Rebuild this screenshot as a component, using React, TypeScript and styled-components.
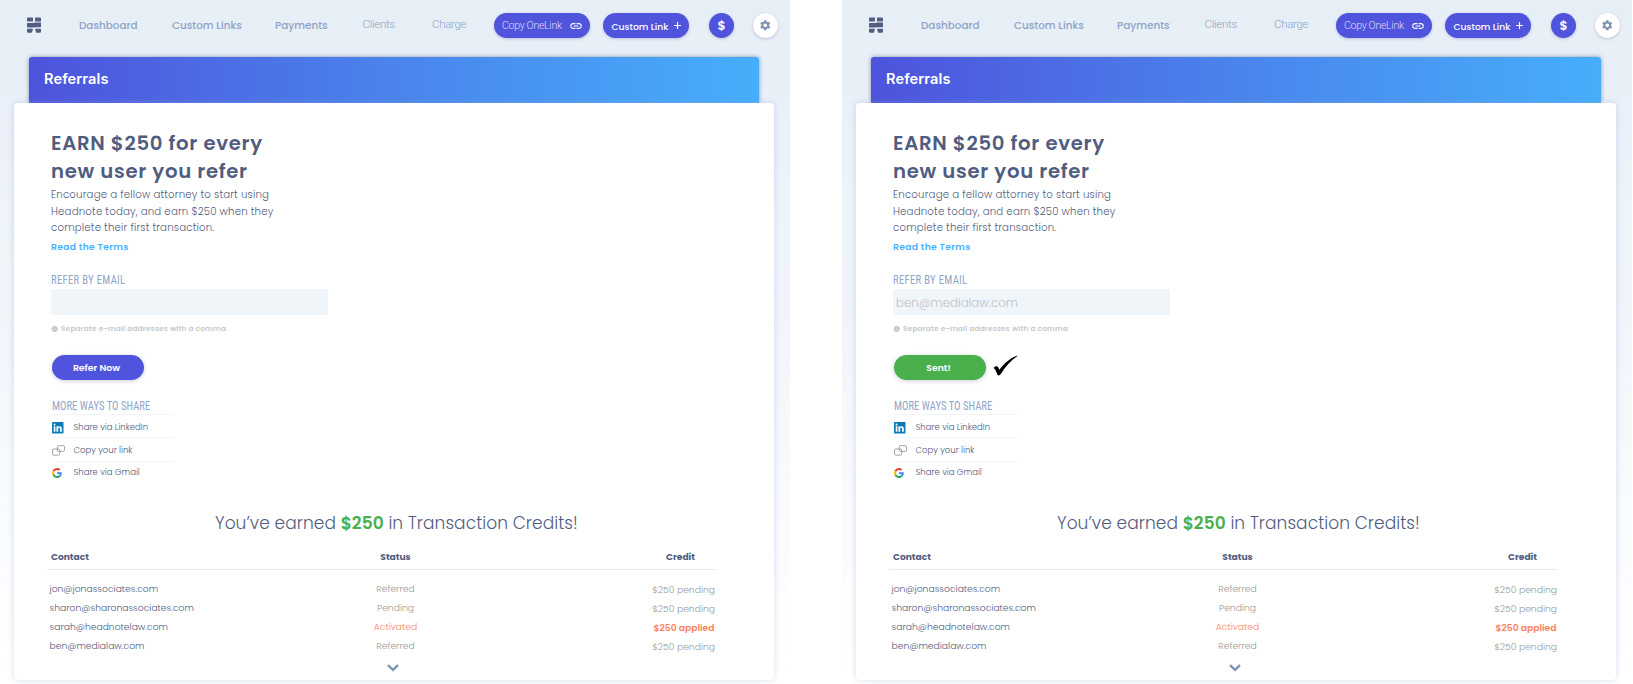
import React from 'react';
import styled, { createGlobalStyle } from 'styled-components';
import { MdLink, MdSettings, MdInfo } from 'react-icons/md';

const Global = createGlobalStyle`
  * { box-sizing: border-box; }
  html, body { margin: 0; padding: 0; background: #fff; }
  body { font-family: Poppins, Inter, sans-serif; color: #505d80; white-space: nowrap; overflow: hidden; }
  button { font-family: inherit; border: 0; margin: 0; padding: 0; }
`;

const Stage = styled.div`
  display: flex;
  gap: 52px;
  width: 1633px;
  height: 684px;
`;

const Screen = styled.section`
  width: 790px;
  height: 684px;
  overflow: hidden;
  background: linear-gradient(180deg, #e6eef6 0%, #e8eff7 9%, #ecf0f9 20%, #eef4f8 30%, #f0f4fa 42%, #f5f8fb 60%, #fafbfe 76%, #fefefe 92%, #fff 100%);
`;

const Nav = styled.nav`
  display: flex;
  align-items: flex-start;
  height: 57px;
  padding: 13px 0 0 27px;
  > * { flex: none; }
`;

const LogoMark = styled.svg`
  width: 14px;
  height: 16px;
  margin: 4px 38px 0 0;
  fill: #525e82;
`;

const NavLink = styled.a<{ $width: number }>`
  width: ${(p) => p.$width}px;
  font-size: 10.4px;
  font-weight: 500;
  line-height: 25px;
  color: #8fa3c6;
`;

const NavLinkLight = styled.a<{ $width: number }>`
  width: ${(p) => p.$width}px;
  font: 300 11.5px/23px Roboto, sans-serif;
  letter-spacing: -0.3px;
  color: #8fa3c6;
`;

const Pill = styled.button<{ $width: number; $gap: number }>`
  display: flex;
  align-items: center;
  width: ${(p) => p.$width}px;
  height: 25px;
  margin-right: ${(p) => p.$gap}px;
  padding-left: 8.5px;
  border-radius: 13px;
  background: #5054dc;
  color: #fff;
  text-align: left;
  box-shadow: 0 1px 3px rgba(80, 84, 160, 0.3);
`;

const CopyLabel = styled.span`
  flex: 1;
  font: 300 10.6px/25px Roboto, sans-serif;
  letter-spacing: -0.33px;
  color: #dcddfb;
`;

const CustomLabel = styled.span`
  width: 62px;
  padding-top: 2px;
  font-size: 9.2px;
  font-weight: 500;
  line-height: 25px;
`;

const LinkIcon = styled(MdLink)`
  width: 14px;
  height: 14px;
  margin: 1px 6.5px 0 0;
`;

const PlusIcon = styled.svg`
  width: 7px;
  height: 7px;
`;

const RoundButton = styled.button<{ $light?: boolean }>`
  display: flex;
  align-items: center;
  justify-content: center;
  width: 25px;
  height: 25px;
  margin-right: 18.5px;
  border-radius: 50%;
  font-size: 12.5px;
  font-weight: 600;
  color: ${(p) => (p.$light ? '#8093b0' : '#fff')};
  background: ${(p) => (p.$light ? '#fff' : '#5054dc')};
  box-shadow: 0 1px 3px rgba(80, 84, 140, 0.3);
`;

const GearIcon = styled(MdSettings)`
  width: 12.5px;
  height: 12.5px;
`;

const Banner = styled.header`
  width: 730px;
  height: 46px;
  margin-left: 29px;
  padding-left: 15px;
  border-radius: 3px 3px 0 0;
  background: linear-gradient(90deg, #4e53dc 0%, #4a84ec 50%, #46aefb 100%);
  box-shadow: 0 0 4px rgba(60, 80, 120, 0.6);
  font: 600 14.6px/45px Inter, sans-serif;
  letter-spacing: 0.1px;
  color: #fff;
`;

const Card = styled.main`
  position: relative;
  display: flex;
  flex-direction: column;
  width: 760px;
  height: 577px;
  margin-left: 14px;
  padding: 26px 0 0 37px;
  border-radius: 4px;
  background: #fff;
  box-shadow: 0 0 6px rgba(150, 175, 220, 0.4);
`;

const Headline = styled.h1`
  margin: 0;
  font-size: 19.7px;
  font-weight: 600;
  line-height: 28px;
  letter-spacing: 0.7px;
`;

const Intro = styled.p`
  margin: 2px 0 3px;
  font-size: 10.2px;
  font-weight: 300;
  line-height: 16.5px;
  letter-spacing: 0.18px;
`;

const Terms = styled.a`
  font-size: 9.2px;
  font-weight: 600;
  line-height: 14px;
  letter-spacing: 0.32px;
  color: #4bb1fc;
`;

const Caption = styled.h2<{ $tight?: boolean }>`
  margin: ${(p) => (p.$tight ? '20px 0 2px 1px' : '20px 0 3px')};
  font: 400 12px/12px 'Roboto Condensed', Roboto, sans-serif;
  letter-spacing: ${(p) => (p.$tight ? 0.06 : 0.38)}px;
  transform: scaleX(0.88);
  transform-origin: left;
  color: #91a5c7;
`;

const EmailField = styled.div`
  width: 277px;
  height: 26px;
  padding-left: 3px;
  border-radius: 2px;
  background: #f0f5fa;
  font-size: 11.8px;
  font-weight: 300;
  line-height: 28px;
  color: #bcc2c8;
`;

const Hint = styled.p`
  display: flex;
  align-items: center;
  gap: 2.5px;
  margin: 9px 0 21px;
  font-size: 7.4px;
  font-weight: 600;
  line-height: 10px;
  letter-spacing: 0.16px;
  color: #c6c8cb;
  svg { width: 7.5px; height: 7.5px; }
`;

const SubmitRow = styled.div`
  display: flex;
  gap: 7px;
  height: 25px;
  margin-left: 1px;
  svg { margin-top: 0.5px; }
`;

const Submit = styled.button<{ $sent: boolean }>`
  width: 92px;
  height: 25px;
  padding-right: 3px;
  border-radius: 13px;
  background: ${(p) => (p.$sent ? '#49b04c' : '#5054dc')};
  box-shadow: 0 1px 4px rgba(60, 60, 110, 0.25);
  color: #fff;
  font-size: 9.3px;
  font-weight: 600;
  line-height: 25px;
`;

const ShareList = styled.ul`
  width: 123px;
  margin: 0 0 0 1px;
  padding: 0;
  list-style: none;
`;

const ShareItem = styled.li`
  display: flex;
  align-items: center;
  height: 23.5px;
  padding-top: 2px;
  border-top: 1.5px solid #f4f5f6;
  font-size: 8.5px;
  font-weight: 300;
  color: #4d597e;
  svg { display: block; }
  &:first-child { padding-top: 3px; }
  &:last-child { padding-top: 0; }
`;

const ShareIcon = styled.span`
  width: 21.5px;
  padding-top: 1px;
`;

const Earned = styled.h2`
  margin: 27px 0 0;
  padding-left: 164px;
  font-size: 17px;
  font-weight: 300;
  line-height: 24px;
  letter-spacing: 0.06px;
  b { font-weight: 600; color: #49b04c; }
`;

const Table = styled.div`
  width: 668.5px;
  margin: 12px 0 0 -4px;
`;

const TableRow = styled.div<{ $head?: boolean }>`
  display: grid;
  grid-template-columns: 298.5px 100px 1fr;
  height: ${(p) => (p.$head ? 23 : 19.1)}px;
  line-height: ${(p) => (p.$head ? 20 : 19.1)}px;
  font-size: ${(p) => (p.$head ? 9.1 : 9.2)}px;
  font-weight: ${(p) => (p.$head ? 700 : 300)};
  border-bottom: ${(p) => (p.$head ? '1px solid #e8eaec' : '0')};
  margin-bottom: ${(p) => (p.$head ? 9 : 0)}px;
`;

const Contact = styled.span<{ $head?: boolean }>`
  padding-left: ${(p) => (p.$head ? 4 : 2.5)}px;
`;

const Status = styled.span<{ $active?: boolean; $head?: boolean }>`
  text-align: center;
  color: ${(p) => (p.$head ? 'inherit' : p.$active ? '#fc8565' : '#999')};
`;

const Credit = styled.span<{ $active?: boolean; $head?: boolean }>`
  padding: ${(p) => (p.$head ? '0 20.5px 0 0' : p.$active ? '1px 1px 0 0' : '1px 0.5px 0 0')};
  text-align: right;
  font-weight: ${(p) => (p.$head ? 700 : p.$active ? 600 : 300)};
  color: ${(p) => (p.$head ? 'inherit' : p.$active ? '#fc7f5c' : '#999')};
`;

const More = styled.svg`
  width: 12px;
  height: 8px;
  margin: 9px 0 0 336px;
`;

const ROWS = [
  { email: 'jon@jonassociates.com', status: 'Referred', credit: '$250 pending' },
  { email: 'sharon@sharonassociates.com', status: 'Pending', credit: '$250 pending' },
  { email: 'sarah@headnotelaw.com', status: 'Activated', credit: '$250 applied', active: true },
  { email: 'ben@medialaw.com', status: 'Referred', credit: '$250 pending' },
];

const LinkedInIcon = () => (
  <svg width="11.5" height="11.5" viewBox="0 0 24 24">
    <path fill="#0b7bb8" d="M1.5 0h21A1.5 1.5 0 0 1 24 1.5v21a1.5 1.5 0 0 1-1.5 1.5h-21A1.5 1.5 0 0 1 0 22.5v-21A1.5 1.5 0 0 1 1.5 0z" />
    <path fill="#fff" d="M3.6 9h3.5v11.4H3.6zM5.3 3.3a2 2 0 1 1 0 4.1 2 2 0 0 1 0-4.1zM9.3 9h3.4v1.6c.5-.9 1.7-1.9 3.4-1.9 3.6 0 4.3 2.3 4.3 5.4v6.3h-3.6v-5.6c0-1.3 0-3-1.8-3s-2.1 1.4-2.1 2.9v5.7H9.3z" />
  </svg>
);

const ChainIcon = () => (
  <svg width="13" height="11" viewBox="0 0 13 11" fill="none" stroke="#8e8e8e" strokeWidth="0.8">
    <rect x="0.5" y="4" width="7.2" height="6.2" rx="1.3" />
    <rect x="5.3" y="0.6" width="7.2" height="5.8" rx="1.3" />
  </svg>
);

const GoogleIcon = () => (
  <svg width="10" height="10" viewBox="0 0 48 48">
    <path fill="#EA4335" d="M24 9.5c3.54 0 6.71 1.22 9.21 3.6l6.85-6.85C35.9 2.38 30.47 0 24 0 14.62 0 6.51 5.38 2.56 13.22l7.98 6.19C12.43 13.72 17.74 9.5 24 9.5z" />
    <path fill="#4285F4" d="M46.98 24.55c0-1.57-.15-3.09-.38-4.55H24v9.02h12.94c-.58 2.96-2.26 5.48-4.78 7.18l7.73 6c4.51-4.18 7.09-10.36 7.09-17.65z" />
    <path fill="#FBBC05" d="M10.53 28.59A14.5 14.5 0 0 1 9.77 24c0-1.6.27-3.14.76-4.59l-7.98-6.19A23.9 23.9 0 0 0 0 24c0 3.88.92 7.54 2.56 10.78z" />
    <path fill="#34A853" d="M24 48c6.48 0 11.93-2.13 15.89-5.81l-7.73-6c-2.15 1.45-4.92 2.3-8.16 2.3-6.26 0-11.57-4.22-13.47-9.91l-7.98 6.19C6.51 42.62 14.62 48 24 48z" />
  </svg>
);

const CheckMark = () => (
  <svg width="25" height="21" viewBox="0 0 25 21">
    <path fill="#000" d="M.4 13c1.4-1.5 3-2 4-1.6.9.5 1.4 1.7 2 3.3C11 8.6 16.5 3.2 24.2.4l.3.7C17.5 5.8 12.5 11.5 8 18.8c-.9 1.3-1.7 1.7-2.3 1.7-1 0-1.4-.7-2-2.4C2.7 15.2 2 13.8.4 13z" />
  </svg>
);

const ReferralScreen = ({ sentTo }: { sentTo?: string }) => (
  <Screen>
    <Nav>
      <LogoMark viewBox="0 0 14 16">
        <path d="M1 .5h4.500q.5 0 .5.6V4q0 .6-.6.6H.6Q0 4.600 0 4V1.500q0-1 1-1zM13 .5H8.500q-.5 0-.5.6V4q0 .6.6.6h4.800q.6 0 .6-.6V1.500q0-1-1-1zM.6 6h5q.7 0 1.400-.2.7-.3 1.400-.3h5q.6 0 .6.6v3.600q0 .6-.6.6h-5Q7.700 10.300 7 10.500q-.7.1-1.400.1h-5Q0 10.600 0 10V6.600Q0 6 .6 6zM1 15.700h3.300q.7 0 .8-.7l.8-2.700q.1-.6-.6-.6H.6q-.6 0-.6.6v2.400q0 1 1 1zM13 15.700H9.700q-.7 0-.8-.7l-.8-2.700q-.1-.6.6-.6h4.700q.6 0 .6.6v2.400q0 1-1 1z" />
      </LogoMark>
      <NavLink $width={93}>Dashboard</NavLink>
      <NavLink $width={103}>Custom Links</NavLink>
      <NavLink $width={87.5}>Payments</NavLink>
      <NavLinkLight $width={69.5}>Clients</NavLinkLight>
      <NavLinkLight $width={61.5}>Charge</NavLinkLight>
      <Pill $width={96} $gap={13.5}>
        <CopyLabel>Copy OneLink</CopyLabel>
        <LinkIcon />
      </Pill>
      <Pill $width={86} $gap={20}>
        <CustomLabel>Custom Link</CustomLabel>
        <PlusIcon viewBox="0 0 7 7"><path d="M3.5 0v7M0 3.5h7" stroke="#fff" strokeWidth="1.2" /></PlusIcon>
      </Pill>
      <RoundButton>$</RoundButton>
      <RoundButton $light><GearIcon /></RoundButton>
    </Nav>
    <Banner>Referrals</Banner>
    <Card>
      <Headline>EARN $250 for every<br />new user you refer</Headline>
      <Intro>
        Encourage a fellow attorney to start using<br />
        Headnote today, and earn $250 when they<br />
        complete their first transaction.
      </Intro>
      <Terms>Read the Terms</Terms>
      <Caption>REFER BY EMAIL</Caption>
      <EmailField>{sentTo}</EmailField>
      <Hint><MdInfo />Separate e-mail addresses with a comma</Hint>
      <SubmitRow>
        <Submit $sent={!!sentTo}>{sentTo ? 'Sent!' : 'Refer Now'}</Submit>
        {sentTo && <CheckMark />}
      </SubmitRow>
      <Caption $tight>MORE WAYS TO SHARE</Caption>
      <ShareList>
        <ShareItem><ShareIcon><LinkedInIcon /></ShareIcon>Share via LinkedIn</ShareItem>
        <ShareItem><ShareIcon><ChainIcon /></ShareIcon>Copy your link</ShareItem>
        <ShareItem><ShareIcon><GoogleIcon /></ShareIcon>Share via Gmail</ShareItem>
      </ShareList>
      <Earned>You’ve earned <b>$250</b> in Transaction Credits!</Earned>
      <Table>
        <TableRow $head>
          <Contact $head>Contact</Contact>
          <Status $head>Status</Status>
          <Credit $head>Credit</Credit>
        </TableRow>
        {ROWS.map((row) => (
          <TableRow key={row.email}>
            <Contact>{row.email}</Contact>
            <Status $active={row.active}>{row.status}</Status>
            <Credit $active={row.active}>{row.credit}</Credit>
          </TableRow>
        ))}
      </Table>
      <More viewBox="0 0 12 8"><path d="M1 1.2l5 4.6 5-4.6" fill="none" stroke="#7f93b2" strokeWidth="2.4" /></More>
    </Card>
  </Screen>
);

export default function App() {
  return (
    <>
      <Global />
      <Stage>
        <ReferralScreen />
        <ReferralScreen sentTo="ben@medialaw.com" />
      </Stage>
    </>
  );
}
